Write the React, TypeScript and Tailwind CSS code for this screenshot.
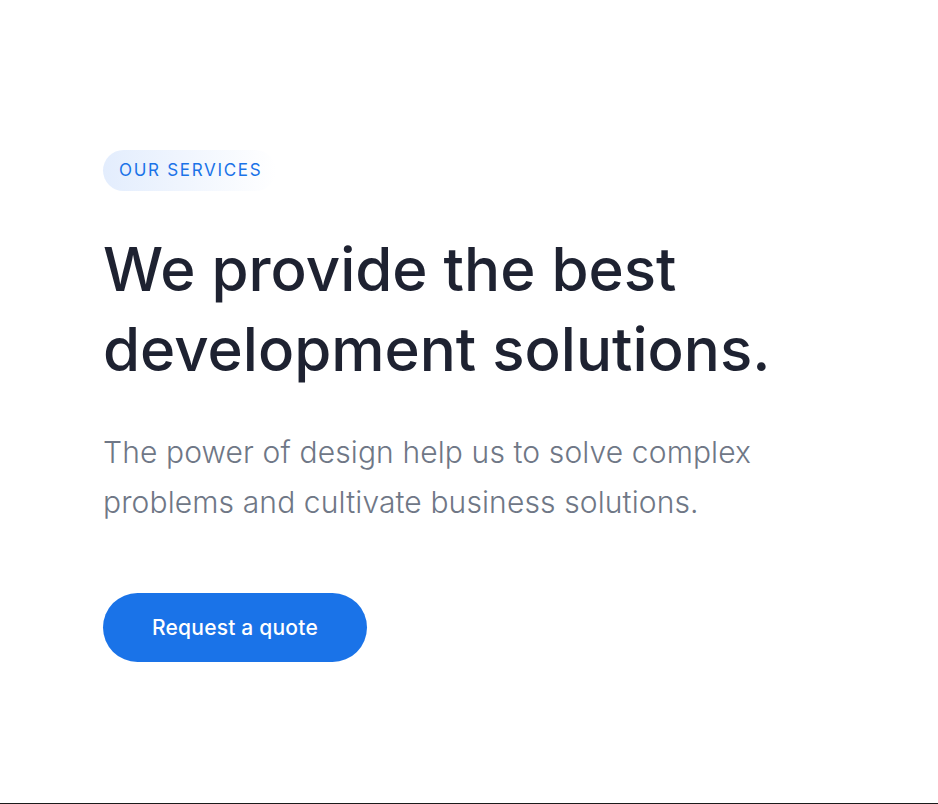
import React from "react";

export default function App() {
  return (
    <div className="min-h-[804px] bg-white flex flex-col" style={{ fontFamily: "Inter, 'Noto Sans', sans-serif" }}>
      <section className="flex-1 px-[103px] pt-[150px]">
        {/* Label */}
        <span className="inline-flex items-center h-[41px] pl-4 pr-[14px] rounded-full bg-gradient-to-r from-[#e3edfd] to-white text-[17px] font-normal tracking-[0.1em] text-[#1a73e8]">
          OUR SERVICES
        </span>

        {/* Heading */}
        <h1 className="mt-[38px] text-[60px] leading-[80px] font-medium text-[#1e2231]">
          We provide the best
          <br />
          development solutions.
        </h1>

        {/* Description */}
        <p className="mt-[38px] text-[30px] leading-[50px] font-light tracking-[0.004em] text-[#6f7786]">
          The power of design help us to solve complex
          <br />
          problems and cultivate business solutions.
        </p>

        {/* CTA */}
        <button className="mt-[66px] h-[69px] w-[264px] rounded-full bg-[#1a73e8] text-white text-[21px] font-medium tracking-[0.01em]">
          Request a quote
        </button>
      </section>
      <div className="h-px bg-[#1b1b1b]" />
    </div>
  );
}
